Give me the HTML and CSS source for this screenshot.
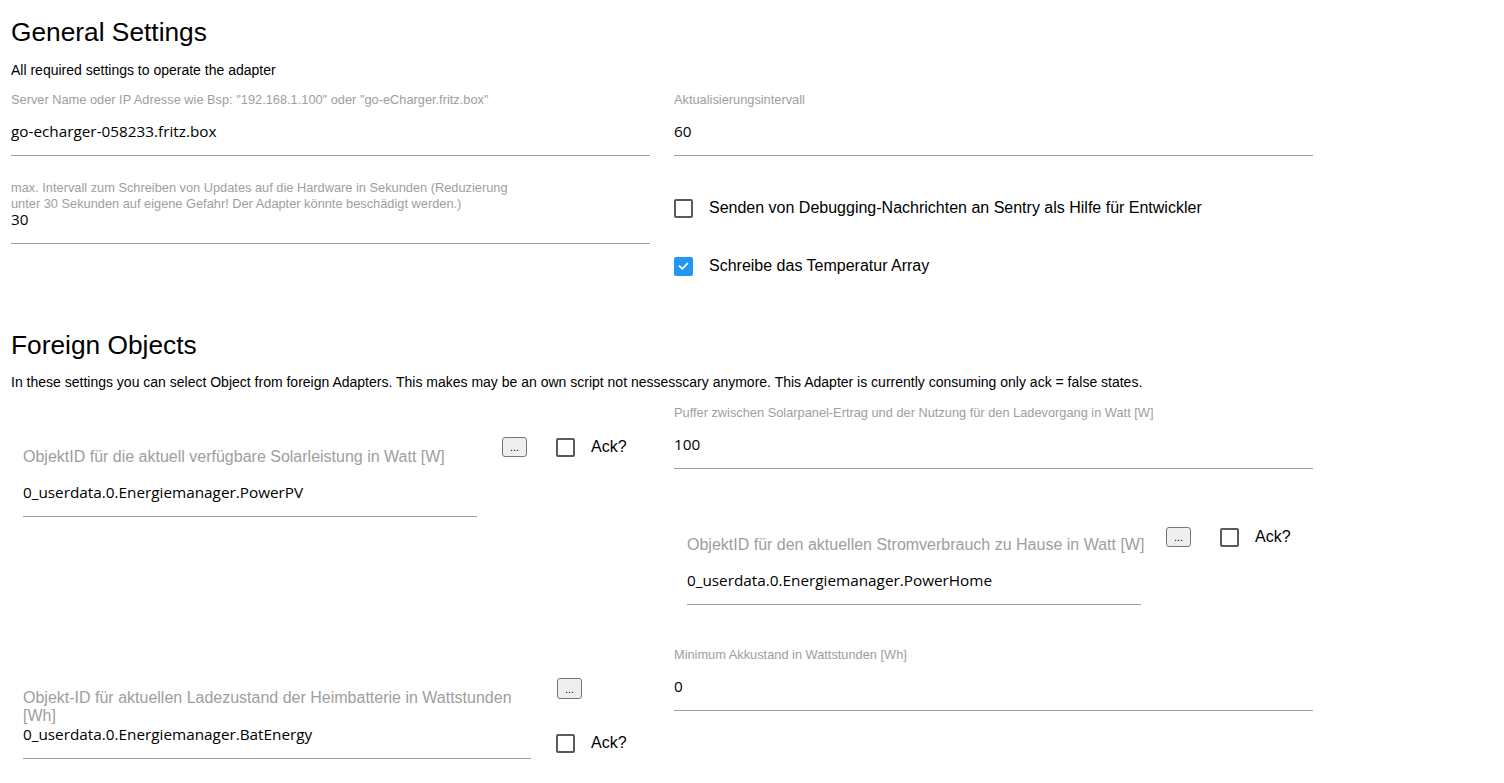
FILE: index.html
```html
<!DOCTYPE html>
<html lang="de">
<head>
<meta charset="utf-8">
<title>Settings</title>
<link rel="stylesheet" href="styles.css">
</head>
<body>
<div class="page">
  <h2 class="title">General Settings</h2>
  <p class="desc">All required settings to operate the adapter</p>
  <div class="cols general">
    <div class="col">
      <div class="field">
        <label class="lbl">Server Name oder IP Adresse wie Bsp: "192.168.1.100" oder "go-eCharger.fritz.box"</label>
        <div class="inp">go-echarger-058233.fritz.box</div>
      </div>
      <div class="field f-two">
        <label class="lbl lbl-wrap">max. Intervall zum Schreiben von Updates auf die Hardware in Sekunden (Reduzierung unter 30 Sekunden auf eigene Gefahr! Der Adapter könnte beschädigt werden.)</label>
        <div class="inp">30</div>
      </div>
    </div>
    <div class="col">
      <div class="field">
        <label class="lbl">Aktualisierungsintervall</label>
        <div class="inp">60</div>
      </div>
      <div class="check-row cr1">
        <span class="cb"></span>
        <span class="cb-text">Senden von Debugging-Nachrichten an Sentry als Hilfe für Entwickler</span>
      </div>
      <div class="check-row cr2">
        <span class="cb checked"><svg viewBox="0 0 18 18" width="18" height="18"><path d="M4.2 9.2 L7.6 12.4 L13.8 5.8" fill="none" stroke="#fff" stroke-width="2" stroke-linecap="round" stroke-linejoin="round"/></svg></span>
        <span class="cb-text">Schreibe das Temperatur Array</span>
      </div>
    </div>
  </div>

  <h2 class="title title2">Foreign Objects</h2>
  <p class="desc desc2">In these settings you can select Object from foreign Adapters. This makes may be an own script not nessesscary anymore. This Adapter is currently consuming only ack = false states.</p>
  <div class="cols foreign">
    <div class="col">
      <div class="obj obj1">
        <div class="ofield">
          <div class="olbl">ObjektID für die aktuell verfügbare Solarleistung in Watt [W]</div>
          <div class="inp">0_userdata.0.Energiemanager.PowerPV</div>
        </div>
        <button class="btn">...</button>
        <div class="ack"><span class="cb"></span><span class="ack-text">Ack?</span></div>
      </div>
      <div class="obj obj3">
        <div class="ofield ofield-wide">
          <div class="olbl olbl-wrap">Objekt-ID für aktuellen Ladezustand der Heimbatterie in Wattstunden [Wh]</div>
          <div class="inp">0_userdata.0.Energiemanager.BatEnergy</div>
        </div>
        <div class="side">
          <button class="btn">...</button>
          <div class="ack"><span class="cb"></span><span class="ack-text">Ack?</span></div>
        </div>
      </div>
    </div>
    <div class="col">
      <div class="field">
        <label class="lbl">Puffer zwischen Solarpanel-Ertrag und der Nutzung für den Ladevorgang in Watt [W]</label>
        <div class="inp">100</div>
      </div>
      <div class="obj obj2">
        <div class="ofield">
          <div class="olbl">ObjektID für den aktuellen Stromverbrauch zu Hause in Watt [W]</div>
          <div class="inp">0_userdata.0.Energiemanager.PowerHome</div>
        </div>
        <button class="btn">...</button>
        <div class="ack"><span class="cb"></span><span class="ack-text">Ack?</span></div>
      </div>
      <div class="field f-akku">
        <label class="lbl">Minimum Akkustand in Wattstunden [Wh]</label>
        <div class="inp">0</div>
      </div>
    </div>
  </div>
</div>
</body>
</html>
```
FILE: styles.css
```css
html, body {
  margin: 0;
  padding: 0;
  background: #fff;
}
body {
  font-family: "Liberation Sans", Arial, sans-serif;
  color: #000;
}
.page {
  padding: 0 11px;
}
.title {
  font-size: 26.3px;
  line-height: 30px;
  font-weight: normal;
  margin: 17px 0 0;
}
.title2 {
  margin-top: 52px;
}
.desc {
  font-size: 14px;
  line-height: 20px;
  margin: 13px 0 0;
}
.desc2 {
  margin-top: 12px;
}
.cols {
  display: grid;
  grid-template-columns: 639px 639px;
  column-gap: 24px;
  align-items: start;
}
.general {
  margin-top: 12px;
}
.foreign {
  margin-top: 13px;
}
.col {
  display: flex;
  flex-direction: column;
}
.field {
  position: relative;
  padding-top: 15px;
}
.lbl {
  position: absolute;
  top: 0;
  left: 0;
  font-size: 12.8px;
  line-height: 15px;
  color: #9e9e9e;
  white-space: nowrap;
}
.lbl-wrap {
  white-space: normal;
  width: 520px;
  line-height: 16px;
}
.f-two {
  margin-top: 24px;
}
.inp {
  height: 48px;
  line-height: 49px;
  border-bottom: 1px solid #9e9e9e;
  font-family: "Open Sans", "Noto Sans", sans-serif;
  font-size: 15.3px;
  color: #000;
  white-space: nowrap;
}
.check-row {
  display: flex;
  align-items: center;
  height: 24px;
}
.cr1 {
  margin-top: 40px;
}
.cr2 {
  margin-top: 34px;
}
.cb {
  box-sizing: border-box;
  width: 19px;
  height: 19px;
  border: 2px solid #5a5a5a;
  border-radius: 2px;
  flex: none;
  display: inline-flex;
  align-items: center;
  justify-content: center;
}
.cb.checked {
  background: #2196f3;
  border-color: #2196f3;
}
.cb.checked svg {
  display: block;
}
.cb-text {
  margin-left: 16px;
  font-size: 16px;
}
.obj {
  display: flex;
  align-items: flex-start;
}
.obj1 {
  padding-left: 12px;
}
.obj2 {
  padding-left: 13px;
  margin-top: 57px;
}
.obj3 {
  padding-left: 12px;
  margin-top: 161px;
}
.ofield {
  width: 454px;
  flex: none;
}
.obj1 .ofield {
  margin-top: 41px;
}
.obj2 .ofield {
  margin-top: 8px;
}
.olbl {
  font-size: 16px;
  line-height: 22px;
  color: #9e9e9e;
  white-space: nowrap;
}
.ofield-wide {
  width: 508px;
  position: relative;
  padding-top: 21px;
  margin-top: 11px;
}
.olbl-wrap {
  position: absolute;
  top: 0;
  left: 0;
  width: 500px;
  white-space: normal;
  line-height: 18px;
}
.btn {
  box-sizing: border-box;
  width: 25px;
  height: 20px;
  padding: 0;
  margin: 0 0 0 25px;
  background: #efefef;
  border: 1px solid #767676;
  border-radius: 3px;
  font-family: "Liberation Sans", Arial, sans-serif;
  font-size: 11px;
  line-height: 16px;
  color: #000;
  flex: none;
}
.obj1 .btn {
  margin-top: 32px;
}
.obj2 .btn {
  margin-top: 1px;
}
.ack {
  display: flex;
  align-items: center;
  height: 20px;
  margin-left: 29px;
}
.obj1 .ack {
  margin-top: 32px;
}
.obj2 .ack {
  margin-top: 1px;
}
.ack-text {
  margin-left: 16px;
  font-size: 16px;
}
.side {
  display: flex;
  flex-direction: column;
  align-items: flex-start;
  margin-left: 26px;
}
.side .btn {
  margin-left: 0;
  height: 21px;
}
.side .ack {
  margin-left: -1px;
  margin-top: 34px;
}
.f-akku {
  margin-top: 42px;
}
```
